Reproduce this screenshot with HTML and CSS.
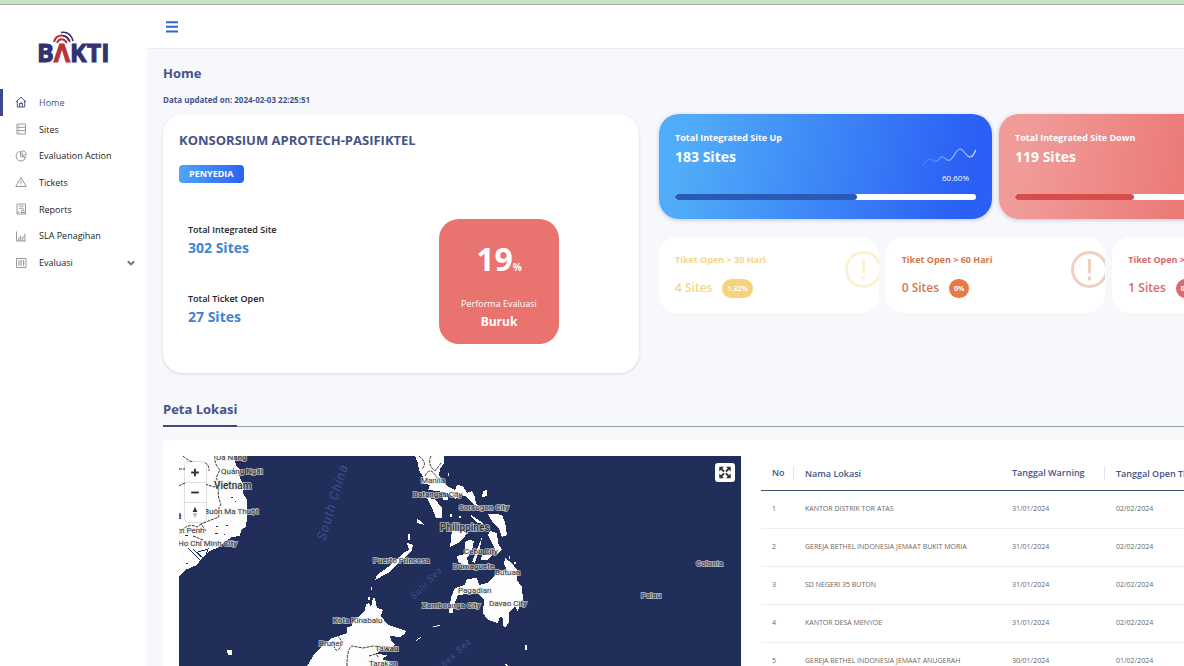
FILE: index.html
```html
<!DOCTYPE html>
<html lang="id">
<head>
<meta charset="utf-8">
<meta name="viewport" content="width=device-width, initial-scale=1">
<title>BAKTI - Home</title>
<link rel="stylesheet" href="styles.css">
</head>
<body>
<div class="strip"></div>
<div class="app">
  <aside class="sidebar">
    <a class="logo" href="#" aria-label="BAKTI">
      <svg width="76" height="42" viewBox="0 0 76 42">
        <text class="logo-text" x="-2" y="31">B<tspan class="logo-red">Λ</tspan>KTI</text>
        <g fill="none" stroke-width="2">
          <path stroke="#b5343a" d="M15 11C17 3 27 2 30 10M18 12C20 7 25 7 28 12"/>
          <path stroke="#31326f" stroke-width="1.600" d="M22 1.500C29 0 33 5 34 10M24 5C28 5 30 8 31 11"/>
        </g>
      </svg>
    </a>
    <nav class="menu">
      <a class="item active" href="#"><svg class="ico" viewBox="0 0 12 12"><path d="M.8 6 6 1.200 11.200 6M2.300 5v6H9.700V5M4.600 11V7.500H7.400V11M4.600 7.500Q6 6 7.400 7.500"/></svg>Home</a>
      <a class="item" href="#"><svg class="ico" viewBox="0 0 12 12"><path d="M2 1h8.500v10H2zM2 4.300h8.500M2 7.600h8.500M3.500 2.700h1M3.500 6h1M3.500 9.300h1"/></svg>Sites</a>
      <a class="item" href="#"><svg class="ico" viewBox="0 0 12 12"><path d="M5.500 1.500A4.700 4.700 0 1 0 10.500 7L5.500 6.500zM7 .8V5h4.200A4.300 4.300 0 0 0 7 .8M7 5l3 3"/></svg>Evaluation Action</a>
      <a class="item" href="#"><svg class="ico" viewBox="0 0 12 12"><path d="M6 1.500 11.200 10.500H.8zM6 4.800v3M6 8.700v.8"/></svg>Tickets</a>
      <a class="item" href="#"><svg class="ico" viewBox="0 0 12 12"><path d="M2 1h8.500v10H2zM4 3.200h4.500M4 5.300h4.500M2 9.200h2.500M7 7h2v2.500H6zM8.500 9.500 10.500 11"/></svg>Reports</a>
      <a class="item" href="#"><svg class="ico" viewBox="0 0 12 12"><path d="M1.500 1.500v9.500H11M3.700 11V8M5.700 11V5.500M7.700 11V7M9.900 11V3.500M3.700 8H5.700M7.700 7H9.900"/></svg>SLA Penagihan</a>
      <button class="item" type="button" aria-expanded="false"><svg class="ico" viewBox="0 0 12 12"><path d="M1.500 1.500h9.500v9H1.500zM4 3v6M6.200 3v6M8.600 3v6M3.400 7h1.400M5.600 4.500H7M8 6h1.400"/></svg>Evaluasi<svg class="chev" viewBox="0 0 8 6"><path d="M.8 1.200 4 4.400 7.200 1.200"/></svg></button>
    </nav>
  </aside>

  <main class="main">
    <header class="topbar">
      <button class="burger" type="button" aria-label="Menu"><svg width="12" height="12" viewBox="0 0 12 12"><path d="M0 1.200h12M0 5.800h12M0 10.400h12"/></svg></button>
    </header>
    <div class="content">
      <h1 class="title">Home</h1>
      <p class="updated">Data updated on: 2024-02-03 22:25:51</p>

      <div class="overview">
        <section class="card consortium">
          <h2 class="cons-name">KONSORSIUM APROTECH-PASIFIKTEL</h2>
          <span class="tag">PENYEDIA</span>
          <div class="cons-body">
            <div class="totals">
              <div><p class="label">Total Integrated Site</p><p class="value">302 Sites</p></div>
              <div><p class="label">Total Ticket Open</p><p class="value">27 Sites</p></div>
            </div>
            <div class="score">
              <p class="score-num">19<small>%</small></p>
              <p class="score-label">Performa Evaluasi</p>
              <p class="score-word">Buruk</p>
            </div>
          </div>
        </section>

        <div class="stats">
          <div class="big-row">
            <section class="big up">
              <p class="label">Total Integrated Site Up</p>
              <p class="value">183 Sites</p>
              <div class="trend">
                <svg width="54" height="18" viewBox="0 0 54 18"><defs><linearGradient id="fade"><stop offset="0" stop-color="#fff" stop-opacity=".1"/><stop offset="1" stop-color="#fff" stop-opacity=".8"/></linearGradient></defs><path fill="none" stroke="url(#fade)" stroke-width="1.200" d="M0 17C4 15 5 11 8 11S12 15 15 13 18 8 21 9 24 14 28 12 34 1 38 1 44 9 48 9 52 4 54 2"/></svg>
                <span>60.60%</span>
              </div>
              <div class="bar"><div class="fill" style="width:60.6%"></div></div>
            </section>
            <section class="big down">
              <p class="label">Total Integrated Site Down</p>
              <p class="value">119 Sites</p>
              <div class="bar"><div class="fill" style="width:39.4%"></div></div>
            </section>
          </div>
          <div class="small-row">
            <section class="small yellow">
              <p class="label">Tiket Open &gt; 30 Hari</p>
              <p class="count">4 Sites <span class="pill">1.32%</span></p>
              <svg class="warn" viewBox="0 0 37 37"><circle cx="18.500" cy="18.500" r="17"/><path d="M18.500 8v14M18.500 25.500v4"/></svg>
            </section>
            <section class="small orange">
              <p class="label">Tiket Open &gt; 60 Hari</p>
              <p class="count">0 Sites <span class="pill">0%</span></p>
              <svg class="warn" viewBox="0 0 37 37"><circle cx="18.500" cy="18.500" r="17"/><path d="M18.500 8v14M18.500 25.500v4"/></svg>
            </section>
            <section class="small red">
              <p class="label">Tiket Open &gt; 90 Hari</p>
              <p class="count">1 Sites <span class="pill">0.33%</span></p>
              <svg class="warn" viewBox="0 0 37 37"><circle cx="18.500" cy="18.500" r="17"/><path d="M18.500 8v14M18.500 25.500v4"/></svg>
            </section>
          </div>
        </div>
      </div>

      <div class="section-head"><h2>Peta Lokasi</h2></div>

      <section class="panel">
        <div class="map">
          <svg class="map-art" viewBox="0 0 562 440" preserveAspectRatio="xMinYMin slice" role="img" aria-label="Peta Lokasi">
            <g class="land">
              <path d="M0 0H55L57 9 61 14 60 19 63 26 65 31 64 37 68 44V61L67 71 62 74 61 80 53 81 43 88 38 92 33 94 28 97 23 102 18 109 6 114 0 120z"/>
              <path d="M236 0H265V7L261 13 260 19 264 26 268 30 276 34 278 29 284 30 288 37 293 35 296 41 297 48 303 52V56L296 49 291 45 286 40 279 38 277 43 268 37 259 35 249 34 251 29 243 27 244 21 240 14 239 7z"/>
              <path d="M248 42 256 43 263 52V62H257L253 52zM304 35 308 34V40L303 41zM309 58H317L323 59 326 66 328 79 323 81 320 73 314 67zM309 79 311 75 318 77 319 87 323 94 318 98 314 89zM292 59 301 65 304 68 299 67 293 62zM273 74 289 76 286 80 279 87 271 91zM286 86 290 84 295 85 293 94 288 102 290 110 285 109 279 106 278 100 286 98zM303 81 301 92 296 107 293 106 299 91zM303 99H313L309 104H302z"/>
              <path d="M326 102 333 107 338 114V124L343 131 344 144 341 146 338 156 337 145 329 141 326 151 329 159 328 169 324 170 326 162 321 161 319 167 309 164 304 157 305 144 299 137 288 138 279 139 274 152 274 157H270L272 141 276 132 286 129 288 123 298 122 300 129 308 127 314 122 318 116 328 114 325 108z"/>
              <path d="M323 140h12l6 6-2 10-3-6-6 6v10l-4 6-2-2v-8l-5-2z"/>
              <path d="M196 124 198 119 209 111 226 96 230 94 228 87 234 89 233 94 223 104 209 117zM229 78h2v6h-2zM238 63l4 2 3 4-3-1-4-1zM192 131h1v3h-1zM254 170l7-1v1l-7 1zM237 184l5-3v1l-5 3zM346 189h2v5h-2zM326 208l3 1v3h-1zM269 17h1v3h-1zM271 58h2v3h-2zM280 60h2v2h-2zM330 100h1v3h-1zM335 106h2v2h-2zM264 41h5v3h-5zM48 194h5v5h-4zM189 141h2v3h-2z"/>
              <path d="M128 210 136 197 153 182 168 177V171L173 170 173 166 179 162 186 154 187 148 190 147 192 151 194 142 196 142 198 152 204 154 202 160 205 164 209 169 221 173 227 175 226 178 221 181 211 180 212 184 216 189 211 193 203 194 196 198 209 199 203 203 214 207 214 215 200 250 190 280 160 330 120 340 90 310 80 270 100 240z"/>
            </g>
            <g class="river"><path d="M9 92 23 106M14 93 25 103M19 96 29 93 27 99M6 79h3M52 41h2M47 69h2M37 70h2M36 77h3M7 107h2M45 78h1M56 45h1"/></g>
            <g class="line"><path d="M4 0Q12 8 24 7 30 6 30 15M36 0Q35 8 41 14L37 22 41 28M0 13H7M0 30Q5 26 10 28M26 28 35 31 41 28Q37 38 42 48 38 54 40 61L32 64 22 68M0 78Q8 66 18 71L22 68 27 75M14 80 24 84M240 0Q249 7 243 13M252 0Q248 9 256 15L262 7M246 20Q251 9 258 22M154 185Q156 198 160 193L164 187 159 180M168 210Q168 192 173 190L184 192 194 190 211 191M190 200 197 198 200 202"/></g>
            <g class="sea">
              <text x="146" y="85" font-size="13" transform="rotate(-73 146 85)">South China</text>
              <text x="235" y="144" font-size="9" transform="rotate(-46 235 144)">Sulu Sea</text>
              <text x="250" y="226" font-size="9" transform="rotate(-43 250 226)">Celebes Sea</text>
            </g>
            <g class="places">
              <text x="37" y="4">Da Nang</text><text x="42" y="18">Quảng Ngãi</text><text class="big-place" x="35" y="33">Vietnam</text>
              <text x="25" y="58">Buôn Ma Thuột</text><text class="big-place" x="-43" y="63">Cambodia</text><text x="-20" y="77">Phnom Penh</text><text x="-1" y="90">Ho Chi Minh City</text>
              <text x="242" y="27">Manila</text><text x="234" y="41">Batangas City</text><text x="280" y="54">Sorsogon City</text>
              <text class="big-place" x="261" y="75">Philippines</text><text x="285" y="98">Cebu City</text><text x="274" y="113">Dumaguete</text>
              <text x="316" y="119">Butuan</text><text x="279" y="137">Pagadian</text><text x="243" y="152">Zamboanga City</text><text x="310" y="150">Davao City</text>
              <text x="194" y="107">Puerto Princesa</text><text x="154" y="167">Kota Kinabalu</text><text x="140" y="190">Brunei</text>
              <text x="196" y="195">Tawau</text><text x="190" y="210">Tarakan</text><text x="517" y="110">Colonia</text><text x="462" y="142">Palau</text>
            </g>
          </svg>
          <div class="zoom">
            <button type="button" aria-label="Zoom in"><svg viewBox="0 0 20 20"><path d="M6 10h8M10 6v8"/></svg></button>
            <button type="button" aria-label="Zoom out"><svg viewBox="0 0 20 20"><path d="M6 10h8"/></svg></button>
            <button type="button" aria-label="Reset bearing"><svg viewBox="0 0 20 20"><path class="north" d="M10 4 12.500 9.500H7.500z"/><path class="south" d="M10 16 12.500 10.500H7.500z"/></svg></button>
          </div>
          <button class="full" type="button" aria-label="Fullscreen"><svg viewBox="0 0 20 20"><path class="tips" d="M4 4h5L4 9zM16 4v5L11 4zM4 16v-5l5 5zM16 16h-5l5-5z"/><path d="M5 5l4 4M15 5l-4 4M5 15l4-4M15 15l-4-4"/></svg></button>
        </div>

        <table class="sites">
          <thead><tr><th class="no"><span>No</span></th><th class="name">Nama Lokasi</th><th class="warning"><span>Tanggal Warning</span></th><th>Tanggal Open Ticket</th></tr></thead>
          <tbody>
            <tr><td>1</td><td>KANTOR DISTRIK TOR ATAS</td><td>31/01/2024</td><td>02/02/2024</td></tr>
            <tr><td>2</td><td>GEREJA BETHEL INDONESIA JEMAAT BUKIT MORIA</td><td>31/01/2024</td><td>02/02/2024</td></tr>
            <tr><td>3</td><td>SD NEGERI 35 BUTON</td><td>31/01/2024</td><td>02/02/2024</td></tr>
            <tr><td>4</td><td>KANTOR DESA MENYOE</td><td>31/01/2024</td><td>02/02/2024</td></tr>
            <tr><td>5</td><td>GEREJA BETHEL INDONESIA JEMAAT ANUGERAH</td><td>30/01/2024</td><td>01/02/2024</td></tr>
          </tbody>
        </table>
      </section>
    </div>
  </main>
</div>
</body>
</html>
```
FILE: styles.css
```css
* { box-sizing: border-box; }
body { margin: 0; height: 100vh; overflow: hidden; display: flex; flex-direction: column; font-family: "Open Sans", "Noto Sans", sans-serif; font-size: 9px; color: #222; background: #f7f8fc; }
h1, h2, p { margin: 0; }
button { font: inherit; color: inherit; background: none; border: 0; padding: 0; cursor: pointer; }
.strip { flex: none; height: 5px; background: #cae1c8; border-bottom: 1px solid #a5b5a4; }
.app { flex: 1; min-height: 0; display: flex; }

.sidebar { flex: none; width: 147px; background: #fff; }
.logo { display: block; padding: 26px 0 0 39px; height: 84px; }
.logo svg { display: block; overflow: visible; }
.logo-text { font: 700 25px "Open Sans", sans-serif; fill: #31326f; stroke: #31326f; stroke-width: 1px; }
.logo-red { fill: #b5343a; stroke: #b5343a; }
.menu { display: grid; grid-auto-rows: 1fr; height: 187px; }
.item { display: flex; align-items: center; width: 100%; padding: 0 12px; gap: 12px; border-left: 3px solid transparent; color: #222; text-decoration: none; text-align: left; }
.item.active { color: #435488; border-left-color: #3c4b87; }
.ico { width: 12px; height: 12px; fill: none; stroke: #999; }
.active .ico { stroke: #435488; }
.chev { width: 8px; height: 6px; margin-left: auto; fill: none; stroke: #777; stroke-width: 2; }

.main { flex: 1; min-width: 0; overflow: hidden; }
.topbar { height: 44px; padding: 16px 19px; background: #fff; border-bottom: 1px solid #eceef4; }
.burger { display: block; }
.burger svg { display: block; fill: none; stroke: #2f67d0; stroke-width: 2; }
.content { min-width: 1201px; padding: 14px 16px; }
.title { font-size: 13px; line-height: 20px; font-weight: 700; color: #435488; }
.updated { margin-top: 10px; font-size: 8px; line-height: 14px; font-weight: 700; color: #435488; }

.overview { display: grid; grid-template-columns: 476fr 673fr; gap: 20px; margin-top: 7px; }
.card { background: #fff; border-radius: 20px; box-shadow: 0 1px 3px rgba(60, 80, 140, .2); }
.consortium { padding: 16px; height: 259px; }
.cons-name { font-size: 13px; line-height: 20px; font-weight: 700; color: #435488; }
.tag { display: inline-block; margin-top: 15px; padding: 0 10px; font-size: 9px; line-height: 18px; font-weight: 700; color: #fff; border-radius: 4px; background: linear-gradient(100deg, #4ea8f8, #2a60f2); }
.cons-body { display: flex; margin-top: 36px; padding-left: 9px; }
.totals { width: 251px; display: flex; flex-direction: column; gap: 33px; padding-top: 4px; }
.label { font-size: 9px; line-height: 14px; font-weight: 600; }
.value { font-size: 14px; line-height: 22px; font-weight: 700; color: #4085d0; }
.score { width: 120px; height: 125px; padding-top: 20px; border-radius: 20px; background: #e9736f; color: #fff; text-align: center; }
.score-num { font-size: 32px; line-height: 40px; font-weight: 700; }
.score-num small { font-size: 10px; }
.score-label { margin-top: 10px; line-height: 14px; }
.score-word { font-size: 12px; line-height: 22px; font-weight: 700; }

.big-row { display: grid; grid-template-columns: 1fr 1fr; gap: 7px; }
.big { position: relative; height: 105px; padding: 17px 16px; border-radius: 20px; color: #fff; box-shadow: 0 1px 4px rgba(60, 80, 140, .3); }
.big .value { margin-top: 1px; color: #fff; }
.big .label { font-weight: 700; }
.up { background: linear-gradient(100deg, #50abf8 10%, #2a60f5 90%); }
.down { background: linear-gradient(100deg, #f09b98 10%, #e8615e 90%); }
.trend { position: absolute; right: 16px; top: 34px; display: flex; flex-direction: column; align-items: flex-end; gap: 5px; font-size: 8px; line-height: 14px; }
.trend span { margin-right: 7px; }
.bar { margin-top: 26px; height: 6px; border-radius: 3px; background: #fff; overflow: hidden; }
.fill { height: 100%; border-radius: 3px; background: #295ab5; }
.down .fill { background: #d64d4a; }

.small-row { display: grid; grid-template-columns: repeat(3, 1fr); gap: 7px; margin-top: 18px; }
.small { position: relative; overflow: hidden; height: 76px; padding: 16px; border-radius: 18px; background: #fff; }
.small .label { font-weight: 700; }
.count { display: flex; align-items: center; gap: 10px; margin-top: 11px; font-size: 12px; line-height: 20px; font-weight: 600; }
.pill { padding: 0 5px; font-size: 7px; line-height: 19px; font-weight: 700; color: #fff; border-radius: 10px; }
.yellow { color: #f5d688; }
.orange { color: #d5774e; }
.red { color: #d9686a; }
.yellow .pill { background: #f5d27c; }
.orange .pill { background: #e77b45; }
.red .pill { background: #e06a6a; }
.warn { position: absolute; right: -3px; top: 14px; width: 37px; height: 37px; fill: none; stroke: currentColor; stroke-width: 3; opacity: .35; }

.section-head { margin-top: 26px; border-bottom: 1px solid #989dac; display: flex; }
.section-head h2 { padding-bottom: 6px; margin-bottom: -1px; font-size: 13px; line-height: 20px; font-weight: 700; color: #435488; border-bottom: 2px solid #3c4b77; }
.panel { display: grid; grid-template-columns: 562fr 555fr; gap: 20px; align-items: start; margin-top: 13px; padding: 16px; background: #fff; }
.map { position: relative; background: #212e5a; }
.map-art { display: block; width: 100%; }
.land { fill: #fdfdfd; shape-rendering: crispEdges; }
.river { fill: none; stroke: #212e5a; shape-rendering: crispEdges; }
.line { fill: none; stroke: #333; stroke-width: 1; stroke-dasharray: 3 1; }
.sea { fill: #3c4f91; font-family: Roboto, sans-serif; font-style: italic; letter-spacing: 1px; }
.places { font-family: Roboto, sans-serif; font-size: 8px; fill: #333; stroke: rgba(235, 235, 235, .65); stroke-width: 2px; paint-order: stroke; }
.big-place { font-size: 10px; font-weight: 500; }
.zoom { position: absolute; left: 6px; top: 6px; width: 21px; background: #fff; border-radius: 4px; box-shadow: 0 0 0 1px rgba(0, 0, 0, .12); }
.zoom button { display: block; width: 100%; height: 20px; }
.zoom button + button { border-top: 1px solid #ddd; }
.zoom svg { display: block; width: 20px; height: 19px; fill: none; stroke: #333; stroke-width: 2; }
.zoom .north { fill: #333; stroke: none; }
.zoom .south { fill: #bbb; stroke: none; }
.full { position: absolute; right: 6px; top: 7px; width: 20px; height: 19px; background: #fff; border-radius: 3px; }
.full svg { display: block; width: 20px; height: 19px; fill: none; stroke: #333; stroke-width: 2; }
.full .tips { fill: #333; stroke: none; }

.sites { width: 100%; border-collapse: separate; border-spacing: 0; table-layout: fixed; }
.sites th { height: 35px; padding: 0 11px; text-align: left; font-size: 9px; font-weight: 600; color: #435488; border-bottom: 1px solid #3f5475; white-space: nowrap; }
.sites .no { width: 33px; padding-right: 0; }
.sites .name { width: 207px; }
.sites .warning { width: 104px; padding-right: 0; }
.no span, .warning span { display: block; line-height: 14px; border-right: 1px solid #e3e5ec; }
.sites td { height: 38px; padding: 0 11px 2px; font-size: 7px; color: #666; border-bottom: 1px solid #eee; white-space: nowrap; }
```
